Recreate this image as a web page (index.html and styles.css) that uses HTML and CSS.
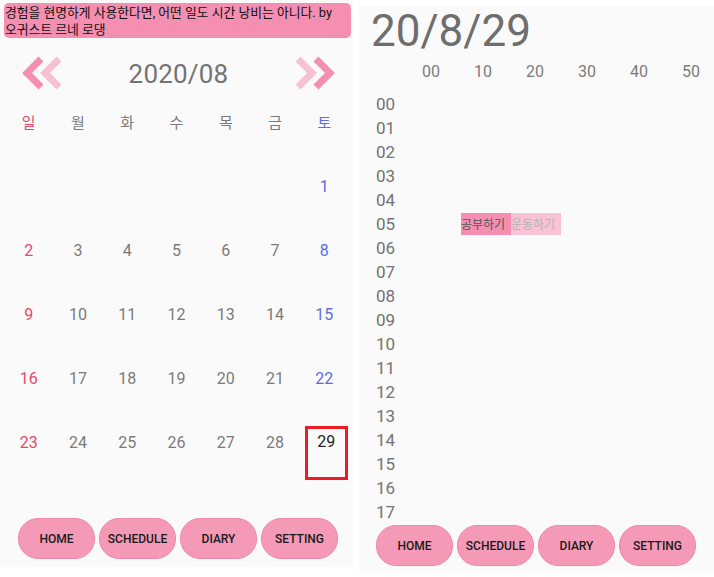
FILE: index.html
```html
<!DOCTYPE html>
<html lang="ko">
<head>
<meta charset="utf-8">
<title>Calendar</title>
<link rel="stylesheet" href="styles.css">
</head>
<body>
<div class="screen">
  <section class="panel cal">
    <div class="quote">경험을 현명하게 사용한다면, 어떤 일도 시간 낭비는 아니다. by<br>오귀스트 르네 로댕</div>
    <div class="month-head">
      <svg class="arrow" width="42" height="34" viewBox="0 0 42 34">
        <polyline points="20,3 6,17 20,31" class="dark"/>
        <polyline points="38,3 24,17 38,31" class="light"/>
      </svg>
      <div class="month-title">2020/08</div>
      <svg class="arrow" width="42" height="34" viewBox="0 0 42 34">
        <polyline points="4,3 18,17 4,31" class="light"/>
        <polyline points="22,3 36,17 22,31" class="dark"/>
      </svg>
    </div>
    <div class="weekdays">
      <span class="sun">일</span><span>월</span><span>화</span><span>수</span><span>목</span><span>금</span><span class="sat">토</span>
    </div>
    <div class="days">
      <div class="day"></div><div class="day"></div><div class="day"></div><div class="day"></div><div class="day"></div><div class="day"></div><div class="day sat">1</div>
      <div class="day sun">2</div><div class="day">3</div><div class="day">4</div><div class="day">5</div><div class="day">6</div><div class="day">7</div><div class="day sat">8</div>
      <div class="day sun">9</div><div class="day">10</div><div class="day">11</div><div class="day">12</div><div class="day">13</div><div class="day">14</div><div class="day sat">15</div>
      <div class="day sun">16</div><div class="day">17</div><div class="day">18</div><div class="day">19</div><div class="day">20</div><div class="day">21</div><div class="day sat">22</div>
      <div class="day sun">23</div><div class="day">24</div><div class="day">25</div><div class="day">26</div><div class="day">27</div><div class="day">28</div><div class="day"><div class="selected">29</div></div>
    </div>
    <nav class="nav">
      <button class="btn">HOME</button><button class="btn">SCHEDULE</button><button class="btn">DIARY</button><button class="btn">SETTING</button>
    </nav>
  </section>

  <section class="panel sched">
    <div class="date-title">20/8/29</div>
    <div class="min-head">
      <span>00</span><span>10</span><span>20</span><span>30</span><span>40</span><span>50</span>
    </div>
    <div class="hours">
      <div class="hour"><span class="hl">00</span></div>
      <div class="hour"><span class="hl">01</span></div>
      <div class="hour"><span class="hl">02</span></div>
      <div class="hour"><span class="hl">03</span></div>
      <div class="hour"><span class="hl">04</span></div>
      <div class="hour"><span class="hl">05</span><span class="slot"></span><span class="slot ev1">공부하기</span><span class="slot ev2">운동하기</span></div>
      <div class="hour"><span class="hl">06</span></div>
      <div class="hour"><span class="hl">07</span></div>
      <div class="hour"><span class="hl">08</span></div>
      <div class="hour"><span class="hl">09</span></div>
      <div class="hour"><span class="hl">10</span></div>
      <div class="hour"><span class="hl">11</span></div>
      <div class="hour"><span class="hl">12</span></div>
      <div class="hour"><span class="hl">13</span></div>
      <div class="hour"><span class="hl">14</span></div>
      <div class="hour"><span class="hl">15</span></div>
      <div class="hour"><span class="hl">16</span></div>
      <div class="hour"><span class="hl">17</span></div>
    </div>
    <nav class="nav nav-r">
      <button class="btn">HOME</button><button class="btn">SCHEDULE</button><button class="btn">DIARY</button><button class="btn">SETTING</button>
    </nav>
  </section>
</div>
</body>
</html>
```

FILE: styles.css
```css
* { box-sizing: border-box; }
html, body { margin: 0; padding: 0; background: #ffffff; }
body {
  font-family: Roboto, "Noto Sans CJK KR", sans-serif;
  width: 714px;
  height: 577px;
  overflow: hidden;
}
.screen {
  display: flex;
  align-items: flex-start;
  gap: 6px;
}
.panel {
  background: #fafafa;
  height: 567px;
  display: flex;
  flex-direction: column;
}
.cal { width: 353px; }
.sched { width: 355px; margin-top: 6px; }

.quote {
  margin: 3px 2px 0 4px;
  height: 35px;
  background: #f48fb1;
  border-radius: 5px;
  padding: 1px 0 0 1px;
  font-family: Roboto, "Noto Sans CJK KR", sans-serif;
  font-size: 12.8px;
  line-height: 17px;
  color: #111;
  white-space: nowrap;
}

.month-head {
  margin-top: 18px;
  height: 34px;
  display: flex;
  align-items: center;
  justify-content: space-between;
  padding: 0 17px 0 21px;
}
.arrow polyline { fill: none; stroke-width: 7; stroke-linejoin: miter; }
.arrow .dark { stroke: #f48fb1; }
.arrow .light { stroke: #f8c1d3; }
.month-title {
  font-size: 26px;
  color: #737373;
  letter-spacing: 0.2px;
  margin-top: 2px;
}

.weekdays {
  margin-top: 17px;
  height: 28px;
  display: grid;
  grid-template-columns: repeat(7, 1fr);
  padding: 0 4px;
  align-items: center;
}
.weekdays span {
  text-align: center;
  font-family: "Noto Sans CJK KR", sans-serif;
  font-size: 15px;
  color: #7a7a7a;
}
.sun { color: #e9486a !important; }
.sat { color: #5a6ee0 !important; }

.days {
  margin-top: 35px;
  display: grid;
  grid-template-columns: repeat(7, 1fr);
  grid-auto-rows: 64px;
  padding: 0 4px;
}
.day {
  text-align: center;
  font-size: 16px;
  line-height: 20px;
  padding-top: 7px;
  color: #7a7a7a;
}
.day:has(.selected) { padding-top: 0; }
.selected {
  width: 43px;
  height: 54px;
  margin-left: 5px;
  border: 3px solid #ec1c24;
  padding-top: 3px;
  color: #222;
}

.nav {
  margin-top: 28px;
  display: flex;
  gap: 4px;
  padding-left: 18px;
}
.nav-r { margin-top: 1px; padding-left: 17px; }
.btn {
  width: 77px;
  height: 41px;
  border-radius: 20px;
  border: 1px solid #f088aa;
  background: #f49ab7;
  font-family: Roboto, sans-serif;
  font-size: 12px;
  font-weight: 500;
  color: #1a1a1a;
  padding: 0;
}

.date-title {
  padding: 2px 0 0 12px;
  font-size: 44px;
  line-height: 46px;
  color: #6e6e6e;
  height: 48px;
}
.min-head {
  margin-top: 6px;
  height: 22px;
  display: grid;
  grid-template-columns: repeat(6, 52px);
  padding-left: 46px;
  align-items: center;
}
.min-head span {
  text-align: center;
  font-size: 16px;
  color: #7a7a7a;
}
.hours {
  margin-top: 10px;
  display: flex;
  flex-direction: column;
}
.hour {
  height: 24px;
  display: grid;
  grid-template-columns: 52px repeat(6, 50px);
  align-items: center;
}
.hl {
  padding-left: 17px;
  font-size: 17px;
  color: #737373;
}
.slot {
  height: 22px;
  font-family: "Noto Sans CJK KR", sans-serif;
  font-size: 12px;
  line-height: 22px;
  white-space: nowrap;
  overflow: hidden;
}
.ev1 { background: #f48fb1; color: #555; }
.ev2 { background: #f8c3d5; color: #b3b3b3; }
```
